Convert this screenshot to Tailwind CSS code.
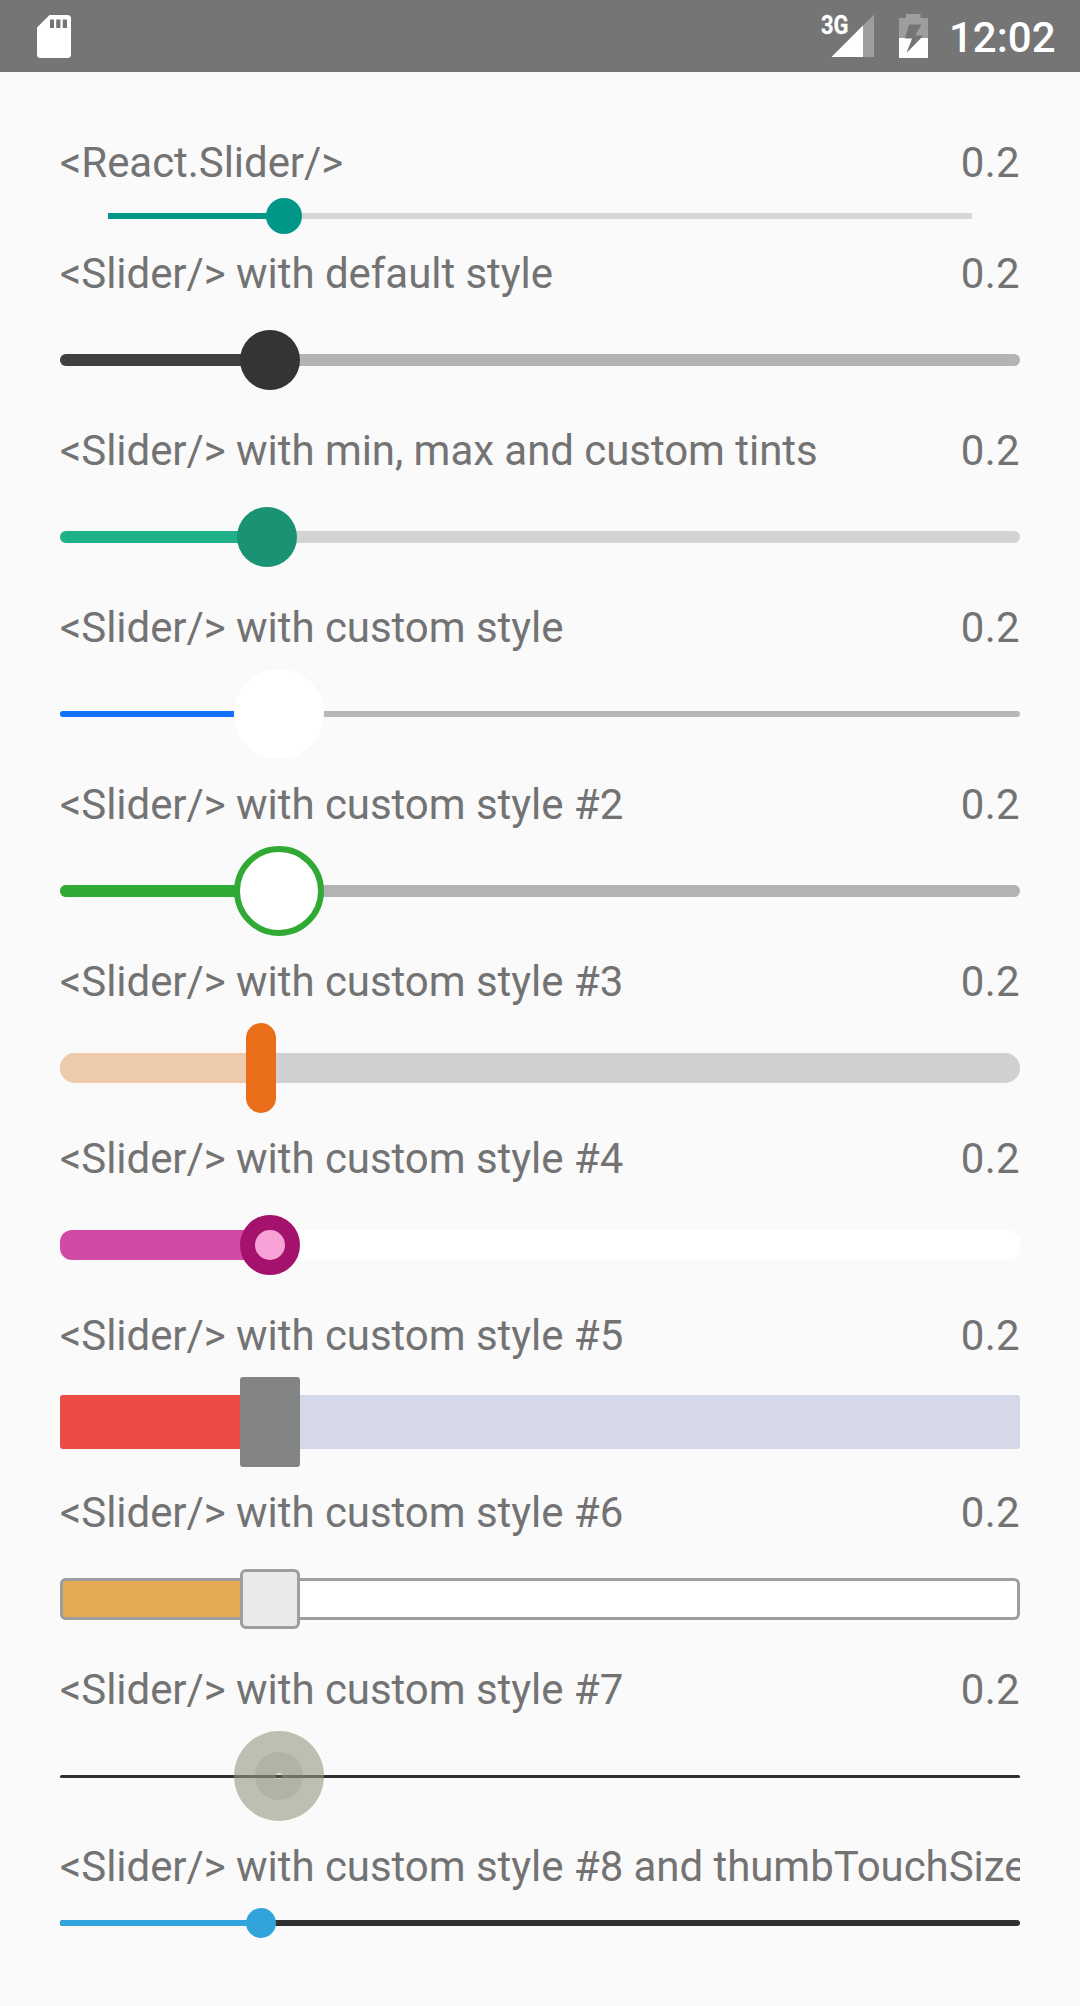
<!DOCTYPE html>
<html lang="en">
<head>
<meta charset="utf-8">
<title>Slider examples</title>
<script src="https://cdn.jsdelivr.net/npm/@tailwindcss/browser@4"></script>
</head>
<body class="w-[1080px] h-[2006px] overflow-hidden bg-[#fafafa] font-['Roboto',sans-serif] text-[42px] leading-[61px] text-[#737373]">
<header class="flex h-18 items-center bg-[#757575] pl-[37px] text-white">
  <svg class="h-[43px] w-[34px]" viewBox="0 0 34 43"><path fill="#fff" fill-rule="evenodd" d="M12.500 0H30.500A3.500 3.500 0 0 1 34 3.500V39.500A3.500 3.500 0 0 1 30.500 43H3.500A3.500 3.500 0 0 1 0 39.500V12.500ZM13 4.500V13H17V4.500ZM19.200 4.500V13H23.400V4.500ZM25.800 4.500V13H30V4.500Z"/></svg>
  <svg class="ml-[749px] h-[44px] w-[56px] overflow-visible" viewBox="820 14 56 44"><path fill="#9e9e9e" d="M874 14.500V57H831.500Z"/><path fill="#fff" d="M863 25.500V57H831.500Z"/><text x="821" y="33.600" font-family="Roboto" font-size="26" font-weight="700" fill="#fff" stroke="#fff" stroke-width=".3" textLength="27.400" lengthAdjust="spacingAndGlyphs">3G</text></svg>
  <svg class="ml-[23px] h-[44px] w-[29px]" viewBox="0 0 29 44"><path fill="#9e9e9e" d="M7 0H21.500V4H29V24H0V4H7Z"/><path fill="#fff" d="M0 24H29V44H0Z"/><path fill="#757575" d="M10 10.500H22.500L16 21.500H24.500L7.500 39L13 24.500H6Z"/></svg>
  <div class="ml-[21px] pt-[3px] text-[42px] font-medium">12:02</div>
</header>
<main class="px-15 pt-15 tracking-[-0.05px]">
  <div class="flex h-[57px] justify-between"><span>&lt;React.Slider/&gt;</span><span class="tracking-[0.3px]">0.2</span></div>
  <div class="mx-12 grid h-[54px] items-center">
    <div class="col-start-1 row-start-1 h-1.5 bg-[#d7d7d7]"></div>
    <div class="col-start-1 row-start-1 h-1.5 w-[176px] bg-[#009688]"></div>
    <div class="col-start-1 row-start-1 ml-[158px] size-9 rounded-full bg-[#009688]"></div>
  </div>

  <div class="flex h-[57px] justify-between"><span>&lt;Slider/&gt; with default style</span><span class="tracking-[0.3px]">0.2</span></div>
  <div class="grid h-30 items-center">
    <div class="col-start-1 row-start-1 h-3 rounded-full bg-[#b3b3b3]"></div>
    <div class="col-start-1 row-start-1 h-3 w-[210px] rounded-full bg-[#3f3f3f]"></div>
    <div class="col-start-1 row-start-1 ml-[180px] size-15 rounded-full bg-[#343434]"></div>
  </div>

  <div class="flex h-[57px] justify-between"><span>&lt;Slider/&gt; with min, max and custom tints</span><span class="tracking-[0.3px]">0.2</span></div>
  <div class="grid h-30 items-center">
    <div class="col-start-1 row-start-1 h-3 rounded-full bg-[#d3d3d3]"></div>
    <div class="col-start-1 row-start-1 h-3 w-[207px] rounded-full bg-[#1fb28a]"></div>
    <div class="col-start-1 row-start-1 ml-[177px] size-15 rounded-full bg-[#1a9274]"></div>
  </div>

  <div class="flex h-[57px] justify-between"><span>&lt;Slider/&gt; with custom style</span><span class="tracking-[0.3px]">0.2</span></div>
  <div class="grid h-30 items-center">
    <div class="col-start-1 row-start-1 h-1.5 rounded-full bg-[#b7b7b7]"></div>
    <div class="col-start-1 row-start-1 h-1.5 w-[219px] rounded-full bg-[#1073ff]"></div>
    <div class="col-start-1 row-start-1 ml-[174px] size-[90px] rounded-full bg-white"></div>
  </div>

  <div class="flex h-[57px] justify-between"><span>&lt;Slider/&gt; with custom style #2</span><span class="tracking-[0.3px]">0.2</span></div>
  <div class="grid h-30 items-center">
    <div class="col-start-1 row-start-1 h-3 rounded-full bg-[#b3b3b3]"></div>
    <div class="col-start-1 row-start-1 h-3 w-[219px] rounded-full bg-[#31a935]"></div>
    <div class="col-start-1 row-start-1 ml-[174px] size-[90px] rounded-full border-6 border-[#31a935] bg-white"></div>
  </div>

  <div class="flex h-[57px] justify-between"><span>&lt;Slider/&gt; with custom style #3</span><span class="tracking-[0.3px]">0.2</span></div>
  <div class="grid h-30 items-center">
    <div class="col-start-1 row-start-1 h-[30px] rounded-full bg-[#d0d0d0]"></div>
    <div class="col-start-1 row-start-1 h-[30px] w-[201px] rounded-full bg-[#edcaa9]"></div>
    <div class="col-start-1 row-start-1 ml-[186px] h-[90px] w-[30px] rounded-full bg-[#eb6e1b]"></div>
  </div>

  <div class="flex h-[57px] justify-between"><span>&lt;Slider/&gt; with custom style #4</span><span class="tracking-[0.3px]">0.2</span></div>
  <div class="grid h-30 items-center">
    <div class="col-start-1 row-start-1 h-[30px] rounded-xl bg-white"></div>
    <div class="col-start-1 row-start-1 h-[30px] w-[210px] rounded-xl bg-[#d14ba6]"></div>
    <div class="col-start-1 row-start-1 ml-[180px] size-15 rounded-full border-15 border-[#a4126e] bg-[#f8a1d6]"></div>
  </div>

  <div class="flex h-[57px] justify-between"><span>&lt;Slider/&gt; with custom style #5</span><span class="tracking-[0.3px]">0.2</span></div>
  <div class="grid h-30 items-center">
    <div class="col-start-1 row-start-1 h-[54px] rounded-[3px] bg-[#d5d8e8]"></div>
    <div class="col-start-1 row-start-1 h-[54px] w-[210px] rounded-[3px] bg-[#ec4c46]"></div>
    <div class="col-start-1 row-start-1 ml-[180px] h-[90px] w-15 rounded-[3px] bg-[#838486]"></div>
  </div>

  <div class="flex h-[57px] justify-between"><span>&lt;Slider/&gt; with custom style #6</span><span class="tracking-[0.3px]">0.2</span></div>
  <div class="grid h-30 items-center">
    <div class="col-start-1 row-start-1 h-[42px] rounded-md border-3 border-[#9e9e9e] bg-white"></div>
    <div class="col-start-1 row-start-1 h-[42px] w-[210px] rounded-md border-3 border-[#9e9e9e] bg-[#e6a954]"></div>
    <div class="col-start-1 row-start-1 ml-[180px] size-15 rounded-md border-3 border-[#9e9e9e] bg-[#eaeaea]"></div>
  </div>

  <div class="flex h-[57px] justify-between"><span>&lt;Slider/&gt; with custom style #7</span><span class="tracking-[0.3px]">0.2</span></div>
  <div class="grid h-30 items-center">
    <div class="col-start-1 row-start-1 mt-px h-[3px] rounded-full bg-[#303030]"></div>
    <div class="col-start-1 row-start-1 ml-[174px] grid size-[90px] place-items-center rounded-full bg-[#969680]/60">
      <div class="grid size-12 place-items-center rounded-full bg-[#808078]/20">
        <div class="size-1.5 rounded-full bg-[linear-gradient(#ddd_33%,#4a4a4a_33%,#4a4a4a_83%,#ddd_83%)]"></div>
      </div>
    </div>
  </div>

  <div class="flex h-[57px] overflow-hidden whitespace-nowrap"><span>&lt;Slider/&gt; with custom style #8 and thumbTouchSize</span></div>
  <div class="grid h-15 items-center">
    <div class="col-start-1 row-start-1 h-1.5 rounded-full bg-[#303030]"></div>
    <div class="col-start-1 row-start-1 h-1.5 w-[201px] rounded-full bg-[#31a4db]"></div>
    <div class="col-start-1 row-start-1 ml-[186px] size-[30px] rounded-full bg-[#31a4db]"></div>
  </div>
</main>
</body>
</html>
